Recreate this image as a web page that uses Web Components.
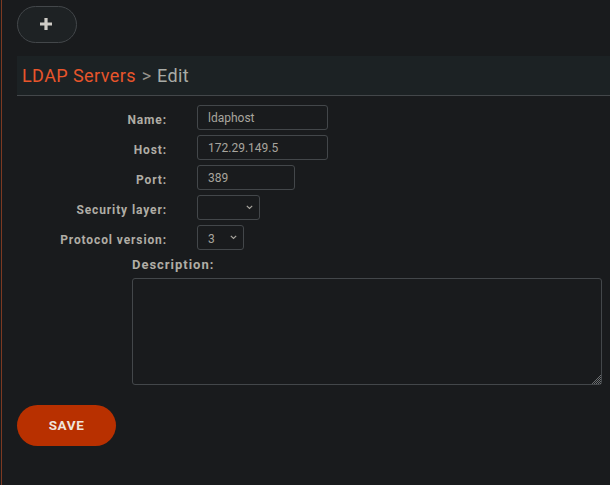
<!DOCTYPE html>
<html>
<head>
<meta charset="utf-8">
<style>
  html, body { margin: 0; height: 100%; background: #191b1d; }
  body { font-family: Roboto, sans-serif; overflow: hidden; }
</style>
</head>
<body>
<ldap-page>
  <pill-button slot="toolbar" kind="ghost"><svg width="12" height="12" viewBox="0 0 12 12" style="margin-left:-2px"><path d="M4.4 0h3.2v4.4H12v3.2H7.6V12H4.4V7.6H0V4.4h4.4z" fill="#cfccc6"/></svg></pill-button>
  <page-title slot="title" section="LDAP Servers" action="Edit"></page-title>
  <form-row label="Name:"><text-box value="ldaphost" width="131"></text-box></form-row>
  <form-row label="Host:"><text-box value="172.29.149.5" width="131"></text-box></form-row>
  <form-row label="Port:"><text-box value="389" width="98"></text-box></form-row>
  <form-row label="Security layer:"><select-box width="63"></select-box></form-row>
  <form-row label="Protocol version:"><select-box value="3" width="47"></select-box></form-row>
  <area-field label="Description:"></area-field>
  <pill-button slot="actions" kind="save">SAVE</pill-button>
</ldap-page>

<script>
'use strict';

class LdapPage extends HTMLElement {
  connectedCallback() {
    this.attachShadow({mode: 'open'});
    this.shadowRoot.innerHTML = `
      <style>
        :host {
          display: block;
          box-sizing: border-box;
          height: 485px;
          margin-left: 1px;
          padding: 6px 0 0 15px;
          border-left: 1px solid #7c3a22;
        }
        .form { display: flex; flex-direction: column; gap: 5px; margin-top: 9px; }
        .actions { margin-top: 20px; }
        .title { margin-top: 13px; }
      </style>
      <div><slot name="toolbar"></slot></div>
      <div class="title"><slot name="title"></slot></div>
      <div class="form"><slot></slot></div>
      <div class="actions"><slot name="actions"></slot></div>
    `;
  }
}

class PillButton extends HTMLElement {
  connectedCallback() {
    this.attachShadow({mode: 'open'});
    this.shadowRoot.innerHTML = `
      <style>
        :host { display: inline-flex; box-sizing: border-box; align-items: center; justify-content: center; border-radius: 999px; }
        :host([kind="ghost"]) { width: 60px; height: 37px; background: #1e2224; border: 1px solid #43474a; padding-bottom: 1px; }
        :host([kind="save"]) { width: 99px; height: 41px; background: #b83000; color: #efe4dc; font-size: 13.5px; font-weight: 700; letter-spacing: 0.6px; padding-bottom: 1px; }
      </style>
      <slot></slot>
    `;
  }
}

class PageTitle extends HTMLElement {
  connectedCallback() {
    this.attachShadow({mode: 'open'});
    this.shadowRoot.innerHTML = `
      <style>
        :host {
          display: block;
          box-sizing: border-box;
          height: 40px;
          padding: 9px 0 0 5px;
          background: #1c2224;
          border-bottom: 1px solid #43474a;
          font-size: 18px;
          line-height: 22px;
          letter-spacing: 0.2px;
        }
        .section { color: #e8552b; letter-spacing: 0.42px; }
        .sep { color: #96938d; margin: 0 1px; }
        .action { color: #a8aba6; letter-spacing: 0.4px; }
      </style>
      <span class="section">${this.getAttribute('section')}</span>
      <span class="sep">&gt;</span>
      <span class="action">${this.getAttribute('action')}</span>
    `;
  }
}

class FormRow extends HTMLElement {
  connectedCallback() {
    this.attachShadow({mode: 'open'});
    this.shadowRoot.innerHTML = `
      <style>
        :host { display: grid; grid-template-columns: 150px auto; column-gap: 30px; align-items: center; height: 25px; justify-content: start; }
        label {
          text-align: right;
          color: #b0ada5;
          font: 700 12px/14px Roboto, sans-serif;
          letter-spacing: 0.89px;
          padding-top: 4px;
        }
      </style>
      <label>${this.getAttribute('label')}</label>
      <slot></slot>
    `;
  }
}

class TextBox extends HTMLElement {
  connectedCallback() {
    this.attachShadow({mode: 'open'});
    this.shadowRoot.innerHTML = `
      <style>
        :host {
          display: flex;
          box-sizing: border-box;
          height: 25px;
          width: ${this.getAttribute('width')}px;
          align-items: center;
          padding: 0 0 0 10px;
          border: 1px solid #43474a;
          border-radius: 3px;
          color: #a8a59e;
          font: 12px Roboto, sans-serif;
        }
      </style>
      ${this.getAttribute('value')}
    `;
  }
}

class SelectBox extends HTMLElement {
  connectedCallback() {
    this.attachShadow({mode: 'open'});
    this.shadowRoot.innerHTML = `
      <style>
        :host {
          display: flex;
          box-sizing: border-box;
          height: 25px;
          width: ${this.getAttribute('width')}px;
          align-items: center;
          justify-content: space-between;
          padding: 0 6px 0 10px;
          border: 1px solid #43474a;
          border-radius: 3px;
          color: #a8a59e;
          font: 12px Roboto, sans-serif;
        }
        span { padding-top: 3px; }
        svg { display: block; }
      </style>
      <span>${this.getAttribute('value') || ''}</span>
      <svg width="7" height="5" viewBox="0 0 7 5"><path d="M0.8 0.8 3.5 3.5 6.2 0.8" fill="none" stroke="#a8a59e" stroke-width="1.2"/></svg>
    `;
  }
}

class AreaField extends HTMLElement {
  connectedCallback() {
    this.attachShadow({mode: 'open'});
    this.shadowRoot.innerHTML = `
      <style>
        :host { display: block; margin: 2px 0 0 115px; }
        label {
          display: block;
          color: #b0ada5;
          font: 700 13px/15px Roboto, sans-serif;
          letter-spacing: 0.98px;
          margin-bottom: 6px;
        }
        .box { position: relative; width: 470px; height: 107px; }
        textarea {
          display: block;
          box-sizing: border-box;
          width: 100%;
          height: 100%;
          margin: 0;
          background: transparent;
          border: 1px solid #43474a;
          border-radius: 3px;
          outline: none;
          resize: none;
        }
        svg { position: absolute; right: 1px; bottom: 1px; }
      </style>
      <label>${this.getAttribute('label')}</label>
      <div class="box">
        <textarea></textarea>
        <svg width="11" height="11" viewBox="0 0 11 11" shape-rendering="crispEdges">
          <defs><pattern id="grip" width="2" height="2" patternUnits="userSpaceOnUse"><path d="M0 0h1v1H0zM1 1h1v1H1z" fill="#6a6d6f"/></pattern></defs>
          <path d="M11 0V11H0z" fill="url(#grip)"/>
        </svg>
      </div>
    `;
  }
}

customElements.define('ldap-page', LdapPage);
customElements.define('pill-button', PillButton);
customElements.define('page-title', PageTitle);
customElements.define('form-row', FormRow);
customElements.define('text-box', TextBox);
customElements.define('select-box', SelectBox);
customElements.define('area-field', AreaField);
</script>
</body>
</html>
